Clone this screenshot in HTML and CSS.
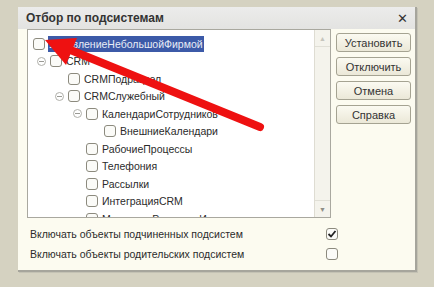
FILE: index.html
```html
<!DOCTYPE html>
<html lang="ru">
<head>
    <meta charset="UTF-8">
    <title>Отбор по подсистемам</title>
    <link rel="stylesheet" href="styles.css">
</head>
<body>

    <div class="dialog">
        <div class="title-bar">
            <span class="title">Отбор по подсистемам</span>
            <span class="close">✕</span>
        </div>

        <div class="content">
            <div class="top-row">
                <!-- tree of subsystems -->
                <div class="tree-box">
                    <ul class="tree">
                        <li class="node lvl0"><span class="toggle"></span><span class="box"></span><span class="label selected">УправлениеНебольшойФирмой</span></li>
                        <li class="node lvl1"><span class="toggle minus"></span><span class="box"></span><span class="label">CRM</span></li>
                        <li class="node lvl2"><span class="toggle"></span><span class="box"></span><span class="label">CRMПодраздел</span></li>
                        <li class="node lvl2"><span class="toggle minus"></span><span class="box"></span><span class="label">CRMСлужебный</span></li>
                        <li class="node lvl3"><span class="toggle minus"></span><span class="box"></span><span class="label">КалендариСотрудников</span></li>
                        <li class="node lvl4"><span class="toggle"></span><span class="box"></span><span class="label">ВнешниеКалендари</span></li>
                        <li class="node lvl3"><span class="toggle"></span><span class="box"></span><span class="label">РабочиеПроцессы</span></li>
                        <li class="node lvl3"><span class="toggle"></span><span class="box"></span><span class="label">Телефония</span></li>
                        <li class="node lvl3"><span class="toggle"></span><span class="box"></span><span class="label">Рассылки</span></li>
                        <li class="node lvl3"><span class="toggle"></span><span class="box"></span><span class="label">ИнтеграцияCRM</span></li>
                        <li class="node lvl3"><span class="toggle"></span><span class="box"></span><span class="label">МассовыеРассылкиИнтеграция</span></li>
                    </ul>
                    <div class="scrollbar">
                        <span class="arrow up">▲</span>
                        <span class="track"></span>
                        <span class="arrow down">▼</span>
                    </div>
                </div>

                <div class="buttons">
                    <button>Установить</button>
                    <button>Отключить</button>
                    <button>Отмена</button>
                    <button>Справка</button>
                </div>
            </div>

            <div class="options">
                <div class="option">
                    <span>Включать объекты подчиненных подсистем</span>
                    <span class="box checked">
                        <svg width="10" height="10" viewBox="0 0 10 10"><path d="M1.5 5 L4 7.5 L8.5 2" fill="none" stroke="#222" stroke-width="1.8"/></svg>
                    </span>
                </div>
                <div class="option">
                    <span>Включать объекты родительских подсистем</span>
                    <span class="box"></span>
                </div>
            </div>
        </div>
    </div>

    <!-- red pointer drawn over the dialog -->
    <svg class="pointer" width="434" height="287" viewBox="0 0 434 287">
        <line x1="260" y1="127" x2="68" y2="49" stroke="#ee1111" stroke-width="8" stroke-linecap="round"/>
        <polygon points="45,40 77,38 66,65" fill="#ee1111"/>
    </svg>

</body>
</html>
```

FILE: styles.css
```css
body {
    margin: 0;
    width: 434px;
    height: 287px;
    background-color: #d5d2c1;
    font-family: "Liberation Sans", Arial, sans-serif;
    font-size: 10.5px;
    color: #2b2b2b;
    padding: 7px 0 0 18px;
    box-sizing: border-box;
    position: relative;
    overflow: hidden;
}

.dialog {
    width: 399px;
    height: 265px;
    box-sizing: border-box;
    background: #fcfbf0;
    border-right: 2px solid #a6a59c;
    border-bottom: 2px solid #a6a59c;
    box-shadow: 1px 1px 0 #c4c2b4;
    display: flex;
    flex-direction: column;
}

.title-bar {
    height: 22px;
    background: linear-gradient(#ececeb, #e3e3e1);
    display: flex;
    align-items: center;
    justify-content: space-between;
    padding: 0 7px 0 8px;
}

.title {
    font-weight: bold;
    font-size: 12px;
    color: #333;
}

.close {
    font-family: "DejaVu Sans", sans-serif;
    font-size: 13px;
    font-weight: bold;
    color: #333;
}

.content {
    padding: 0 4px 0 9px;
}

.top-row {
    display: flex;
    gap: 5px;
}

.tree-box {
    width: 306px;
    height: 189px;
    box-sizing: border-box;
    border: 1px solid #a9a89f;
    background: white;
    display: flex;
    overflow: hidden;
}

.tree {
    list-style: none;
    margin: 0;
    padding: 5px 0 0 5px;
    flex: 1;
    overflow: hidden;
}

.node {
    height: 17.5px;
    display: flex;
    align-items: center;
    white-space: nowrap;
}

.lvl0 .toggle { display: none; }
.lvl2 { padding-left: 18px; }
.lvl3 { padding-left: 36px; }
.lvl4 { padding-left: 54px; }

.toggle {
    width: 9px;
    height: 9px;
    margin: 0 4px;
    box-sizing: border-box;
}

.toggle.minus {
    border: 1px solid #b0b0aa;
    border-radius: 50%;
    position: relative;
}

.toggle.minus::after {
    content: "";
    position: absolute;
    left: 1px;
    right: 1px;
    top: 3px;
    height: 1px;
    background: #9a9a94;
}

.box {
    width: 12px;
    height: 12px;
    box-sizing: border-box;
    border: 1px solid #8c8a7e;
    border-radius: 3px;
    background: #fbfbf8;
    display: inline-flex;
    align-items: center;
    justify-content: center;
    flex-shrink: 0;
}

.label {
    margin-left: 3px;
    padding: 1px;
    line-height: 14px;
}

.label.selected {
    background: #3c5aa8;
    color: #e8ecf6;
}

.scrollbar {
    width: 15px;
    flex-shrink: 0;
    border-left: 1px solid #dedcd2;
    background: #f4f3ec;
    display: flex;
    flex-direction: column;
}

.arrow {
    height: 16px;
    font-size: 7px;
    color: #c6c5bd;
    display: flex;
    align-items: center;
    justify-content: center;
    border-bottom: 1px solid #e0dfd6;
}

.arrow.down {
    border-bottom: none;
    border-top: 1px solid #e0dfd6;
    color: #8e8d86;
}

.track { flex: 1; }

.buttons {
    display: flex;
    flex-direction: column;
    gap: 5px;
    padding-top: 4px;
}

button {
    width: 75px;
    height: 19px;
    font-family: "Liberation Sans", Arial, sans-serif;
    font-size: 11px;
    color: #333;
    background: linear-gradient(#fbfaf1, #ebe8d8);
    border: 1px solid #a5a392;
    border-radius: 3px;
    padding: 0;
}

.options {
    padding-top: 6px;
}

.option {
    display: flex;
    justify-content: space-between;
    align-items: center;
    height: 20px;
    padding: 0 73px 0 3px;
}

.pointer {
    position: absolute;
    left: 0;
    top: 0;
}
```
